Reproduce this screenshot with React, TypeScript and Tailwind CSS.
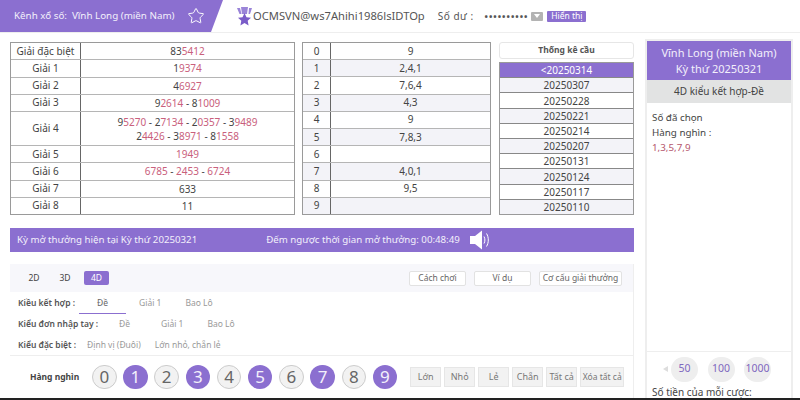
import React from "react";
import { Star } from "lucide-react";

const prizes = [
  { name: "Giải đặc biệt", lines: [["835412"]] },
  { name: "Giải 1", lines: [["19374"]] },
  { name: "Giải 2", lines: [["46927"]] },
  { name: "Giải 3", lines: [["92614", "81009"]] },
  { name: "Giải 4", lines: [["95270", "27134", "20357", "39489"], ["24426", "38971", "81558"]] },
  { name: "Giải 5", lines: [["1949"]] },
  { name: "Giải 6", lines: [["6785", "2453", "6724"]] },
  { name: "Giải 7", lines: [["633"]] },
  { name: "Giải 8", lines: [["11"]] },
];

const tails = ["9", "2,4,1", "7,6,4", "4,3", "9", "7,8,3", "", "4,0,1", "9,5", ""];
const draws = ["<20250314", "20250307", "20250228", "20250221", "20250214", "20250207", "20250131", "20250124", "20250117", "20250110"];
const quickPicks = ["Lớn", "Nhỏ", "Lẻ", "Chẵn", "Tất cả", "Xóa tất cả"];

const Num = ({ value }: { value: string }) => {
  const black = value.length === 6 ? 2 : value.length === 5 ? 1 : value.length === 4 ? 0 : value.length;
  return (
    <span>
      {value.slice(0, black)}
      <span className="text-[#c9607c]">{value.slice(black)}</span>
    </span>
  );
};

const ResultLine = ({ items }: { items: string[] }) => (
  <div>
    {items.map((v, i) => (
      <span key={i}>
        {i > 0 && " - "}
        <Num value={v} />
      </span>
    ))}
  </div>
);

const Logo = () => (
  <svg width="15" height="20" viewBox="0 0 15 20" className="shrink-0">
    <path d="M0 2h3l1.500 6H2.500zM4 1h7l-1 7H5zM12 2h3l-2 6h-1.500z" fill="#9a84d8" />
    <path d="M7.500 7l2 4.300 4.500.5-3.300 3 .9 4.700-4.100-2.400-4.100 2.400.9-4.700-3.300-3 4.500-.5z" fill="#7a5cc8" />
  </svg>
);

const Speaker = () => (
  <svg width="22" height="20" viewBox="0 0 22 20" className="ml-[10px]">
    <path d="M0 6h5l7-5.500v19L5 14H0z" fill="#fff" />
    <path d="M14 6.500c1.200 2.200 1.200 4.800 0 7M16.500 3.500c2.400 3.800 2.400 9.200 0 13" fill="none" stroke="#fff" strokeWidth="1" />
  </svg>
);

export default function App() {
  return (
    <div className="flex h-[400px] w-[800px] flex-col overflow-hidden bg-white font-['Noto_Sans',sans-serif] text-[10px] text-[#444]">
      <header className="relative flex h-[33px] shrink-0 items-center border-b border-[#eee]">
        <div className="flex h-[32px] w-[223px] items-center bg-[#8b6fd0] pl-[14px] text-[#f3f0fb] [clip-path:polygon(0_0,100%_0,211px_100%,0_100%)]">
          <span className="text-[9.800px]">Kênh xổ số:</span>
          <span className="ml-[5px] text-[9.800px]">Vĩnh Long (miền Nam)</span>
          <Star size={18} strokeWidth={1.300} className="ml-[12px] text-white" />
        </div>
        <div className="ml-[14px] flex items-center">
          <Logo />
          <span className="ml-[1px] text-[11.200px] text-[#555]">OCMSVN@ws7Ahihi1986lsIDTOp</span>
        </div>
        <span className="ml-[13px] text-[10px] tracking-[0.5px] text-[#555]">Số dư :</span>
        <span className="ml-[11px] text-[9px] font-bold leading-none tracking-[1px] text-[#555]">••••••••••</span>
        <span className="ml-[3px] flex h-[9px] w-[12px] items-center justify-center rounded-[1px] bg-[#b3b3b3]">
          <span className="h-0 w-0 border-x-[3px] border-t-[4px] border-x-transparent border-t-white" />
        </span>
        <span className="ml-[4px] flex h-[11px] w-[39px] items-center justify-center rounded-[1px] bg-[#8b6fd0] text-[8.500px] text-white">Hiển thị</span>
      </header>

      <div className="flex min-h-0 flex-1">
        <main className="flex w-[634px] shrink-0 flex-col pl-[10px] pt-[9px]">
          <div className="flex h-[173px] gap-[7px]">
            <div className="flex w-[285px] flex-col border border-[#9a9a9a]">
              {prizes.map((p) => (
                <div key={p.name} className={`flex border-b border-[#b5b5b5] last:border-b-0 ${p.lines.length > 1 ? "h-[34px]" : "flex-1"}`}>
                  <div className="flex w-[70px] items-center justify-center border-r border-[#666]">{p.name}</div>
                  <div className="flex flex-1 flex-col items-center justify-center leading-[14px]">
                    {p.lines.map((l, i) => (
                      <ResultLine key={i} items={l} />
                    ))}
                  </div>
                </div>
              ))}
            </div>

            <div className="flex w-[189px] flex-col border border-[#9a9a9a]">
              {tails.map((t, i) => (
                <div key={i} className={`flex flex-1 border-b border-[#b5b5b5] last:border-b-0 ${i % 2 === 1 ? "bg-[#f3f3f8]" : "bg-white"}`}>
                  <div className="flex w-[28px] items-center justify-center border-r border-[#666]">{i}</div>
                  <div className="flex flex-1 items-center justify-center">{t}</div>
                </div>
              ))}
            </div>

            <div className="ml-[1px] flex w-[135px] flex-col">
              <div className="flex h-[17px] shrink-0 items-center justify-center rounded-[3px] border border-[#e6e6e6] text-[8.500px] font-bold text-[#555]">Thống kê cầu</div>
              <div className="mt-[3px] flex min-h-0 flex-1 flex-col border border-[#9a9a9a]">
                {draws.map((d, i) => (
                  <div
                    key={d}
                    className={`flex min-h-0 flex-1 items-center justify-center border-b border-[#888] leading-none last:border-b-0 ${
                      i === 0 ? "bg-[#8b6fd0] text-white" : i % 2 === 1 ? "bg-[#f3f3f8]" : "bg-white"
                    }`}
                  >
                    {d}
                  </div>
                ))}
              </div>
            </div>
          </div>

          <div className="mt-[13px] flex h-[24px] shrink-0 items-center bg-[#8b6fd0] pl-[7px] text-[9.700px] text-[#f3f0fb]">
            <span>Kỳ mở thưởng hiện tại Kỳ thứ 20250321</span>
            <span className="ml-[69px]">Đếm ngược thời gian mở thưởng: 00:48:49</span>
            <Speaker />
          </div>

          <section className="mt-[12px] flex min-h-0 flex-1 flex-col border-r border-[#eee]">
            <div className="flex h-[28px] shrink-0 items-center bg-[#f7f7fb] pl-[12px] pr-[11px] text-[8.500px]">
              <div className="flex items-center gap-[4px]">
                <span className="flex h-[14px] w-[24px] items-center justify-center">2D</span>
                <span className="ml-[3px] flex h-[14px] w-[24px] items-center justify-center">3D</span>
                <span className="ml-[3px] flex h-[14px] w-[25px] items-center justify-center rounded-[2px] bg-[#8b6fd0] text-white">4D</span>
              </div>
              <div className="ml-auto flex gap-[8px] text-[8.500px] text-[#666]">
                <span className="flex h-[15px] w-[57px] items-center justify-center rounded-[2px] border border-[#e2e2e2] bg-white">Cách chơi</span>
                <span className="flex h-[15px] w-[57px] items-center justify-center rounded-[2px] border border-[#e2e2e2] bg-white">Ví dụ</span>
                <span className="flex h-[15px] w-[83px] items-center justify-center rounded-[2px] border border-[#e2e2e2] bg-white">Cơ cấu giải thưởng</span>
              </div>
            </div>

            <div className="h-[64px] shrink-0 border-b border-[#eee] pl-[8px] pt-[1px] text-[8.500px] text-[#999]">
              <div className="flex h-[21px] items-center">
                <span className="w-[61px] font-semibold text-[#555]">Kiều kết hợp :</span>
                <span className="flex h-[21px] w-[47px] items-center justify-center border-b border-[#8b6fd0] text-[#666]">Đề</span>
                <span className="ml-[13px]">Giải 1</span>
                <span className="ml-[24px]">Bao Lô</span>
              </div>
              <div className="flex h-[21px] items-center">
                <span className="w-[84px] whitespace-nowrap font-semibold text-[#555]">Kiểu đơn nhập tay :</span>
                <span className="ml-[17px]">Đề</span>
                <span className="ml-[31px]">Giải 1</span>
                <span className="ml-[24px]">Bao Lô</span>
              </div>
              <div className="flex h-[21px] items-center">
                <span className="w-[60px] whitespace-nowrap font-semibold text-[#555]">Kiểu đặc biệt :</span>
                <span className="ml-[9px]">Định vị (Đuôi)</span>
                <span className="ml-[14px]">Lớn nhỏ, chẵn lẻ</span>
              </div>
            </div>

            <div className="flex min-h-0 flex-1 items-center pl-[20px]">
              <span className="w-[62px] text-[8.500px] font-bold text-[#444]">Hàng nghìn</span>
              <div className="flex gap-[6.700px]">
                {Array.from({ length: 10 }, (_, n) => (
                  <span
                    key={n}
                    className={`flex h-[24px] w-[24.500px] items-center justify-center rounded-full text-[17px] ${
                      n % 2 === 1 ? "bg-[#8b6fd0] text-[#f3f0fb]" : "border border-[#ccc] bg-[#f2f2f2] text-[#666]"
                    }`}
                  >
                    {n}
                  </span>
                ))}
              </div>
              <div className="ml-[13px] flex gap-[3px] text-[9px] text-[#777]">
                {quickPicks.map((q, i) => (
                  <span key={q} className={`flex h-[20px] items-center justify-center whitespace-nowrap border border-[#e6e6e6] bg-[#f2f2f2] ${i === 5 ? "w-[44px] text-[8.500px]" : "w-[31px]"}`}>
                    {q}
                  </span>
                ))}
              </div>
            </div>
          </section>
        </main>

        <aside className="ml-[11px] mt-[6px] flex w-[148px] shrink-0 flex-col border-x-2 border-t-2 border-[#eeeeee] text-[9.800px]">
          <div className="flex h-[39px] shrink-0 flex-col items-center justify-center bg-[#8b6fd0] text-[11px] leading-[16px] text-[#f3f0fb]">
            <span>Vĩnh Long (miền Nam)</span>
            <span>Kỳ thứ 20250321</span>
          </div>
          <div className="flex h-[23px] shrink-0 items-center justify-center bg-[#e2e3e3] text-[10px]">4D kiểu kết hợp-Đề</div>
          <div className="flex-1 px-[5px] pt-[7px] leading-[15px]">
            <div>Số đã chọn</div>
            <div>Hàng nghìn :</div>
            <div className="text-[#b5566c]">1,3,5,7,9</div>
          </div>
          <div className="h-[47px] shrink-0 border-t border-[#eee] pl-[5px]">
            <div className="flex h-[34px] items-center pl-[11px]">
              <span className="h-0 w-0 border-y-[3px] border-r-[5px] border-y-transparent border-r-[#ddd]" />
              <div className="ml-[3px] flex gap-[9.500px] text-[10.500px] text-[#7f68bf]">
                <span className="flex h-[25px] w-[27px] items-center justify-center rounded-full bg-[#eeeeee]">50</span>
                <span className="flex h-[25px] w-[27px] items-center justify-center rounded-full bg-[#eeeeee]">100</span>
                <span className="flex h-[25px] w-[27px] items-center justify-center rounded-full bg-[#eeeeee]">1000</span>
              </div>
            </div>
            <div className="whitespace-nowrap text-[10px] leading-[12px]">Số tiền của mỗi cược:</div>
          </div>
        </aside>
      </div>
      <div className="h-[2px] shrink-0 bg-[#222]" />
    </div>
  );
}
